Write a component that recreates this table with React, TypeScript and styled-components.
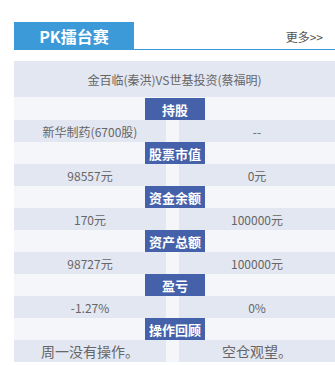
import styled, { createGlobalStyle } from "styled-components";

const GlobalStyle = createGlobalStyle`
  html, body {
    margin: 0;
    padding: 0;
    background: #ffffff;
    overflow: hidden;
  }
  body {
    font-family: "Noto Sans CJK SC", "Noto Sans", sans-serif;
  }
`;

type Row = {
  title: string;
  left: string;
  right: string;
  big?: boolean;
};

const rows: Row[] = [
  { title: "持股", left: "新华制药(6700股)", right: "--" },
  { title: "股票市值", left: "98557元", right: "0元" },
  { title: "资金余额", left: "170元", right: "100000元" },
  { title: "资产总额", left: "98727元", right: "100000元" },
  { title: "盈亏", left: "-1.27%", right: "0%" },
  { title: "操作回顾", left: "周一没有操作。", right: "空仓观望。", big: true },
];

const App = () => {
  return (
    <Page>
      <GlobalStyle />

      {/* 标题栏 */}
      <Header>
        <Tab>PK擂台赛</Tab>
        <More>更多&gt;&gt;</More>
      </Header>

      {/* 对战表 */}
      <Board>
        <Match>金百临(秦洪)VS世基投资(蔡福明)</Match>
        <Sections>
          {rows.map((r) => (
            <div key={r.title}>
              <SectionHead>
                <Badge>{r.title}</Badge>
              </SectionHead>
              <DataRow>
                <Cell $big={r.big}>{r.left}</Cell>
                <Cell $big={r.big}>{r.right}</Cell>
              </DataRow>
            </div>
          ))}
        </Sections>
      </Board>
    </Page>
  );
};

export default App;

const Page = styled.div`
  width: 321px;
  padding: 22px 0 0 14px;
`;

const Header = styled.div`
  display: flex;
  justify-content: space-between;
  align-items: stretch;
  height: 27px;
  border-bottom: 1px solid #3d9ad9;
`;

const Tab = styled.div`
  width: 120px;
  height: 28px;
  margin-bottom: -1px;
  background: #3d9ad9;
  color: #ffffff;
  font-size: 16px;
  font-weight: 700;
  display: flex;
  align-items: center;
  justify-content: center;
`;

const More = styled.div`
  display: flex;
  align-items: center;
  padding: 1px 12px 0 0;
  font-size: 12px;
  color: #555555;
`;

const Board = styled.div`
  margin-top: 11px;
  background: #f4f6fa;
`;

const Match = styled.div`
  height: 36px;
  background: #e3e7f2;
  color: #666666;
  font-size: 12px;
  display: flex;
  align-items: center;
  justify-content: center;
`;

const Sections = styled.div`
  padding-top: 1px;
`;

const SectionHead = styled.div`
  height: 22px;
  display: flex;
  justify-content: center;
  padding-left: 1px;
`;

const Badge = styled.div`
  width: 60px;
  background: #4561a9;
  color: #ffffff;
  font-size: 13px;
  font-weight: 700;
  display: flex;
  align-items: center;
  justify-content: center;
`;

const DataRow = styled.div`
  display: grid;
  grid-template-columns: 152px 1fr;
  column-gap: 13px;
  height: 22px;
`;

const Cell = styled.div<{ $big?: boolean }>`
  background: #e3e7f2;
  color: #666666;
  font-size: ${(p) => (p.$big ? "14px" : "12px")};
  display: flex;
  align-items: center;
  justify-content: center;
`;
